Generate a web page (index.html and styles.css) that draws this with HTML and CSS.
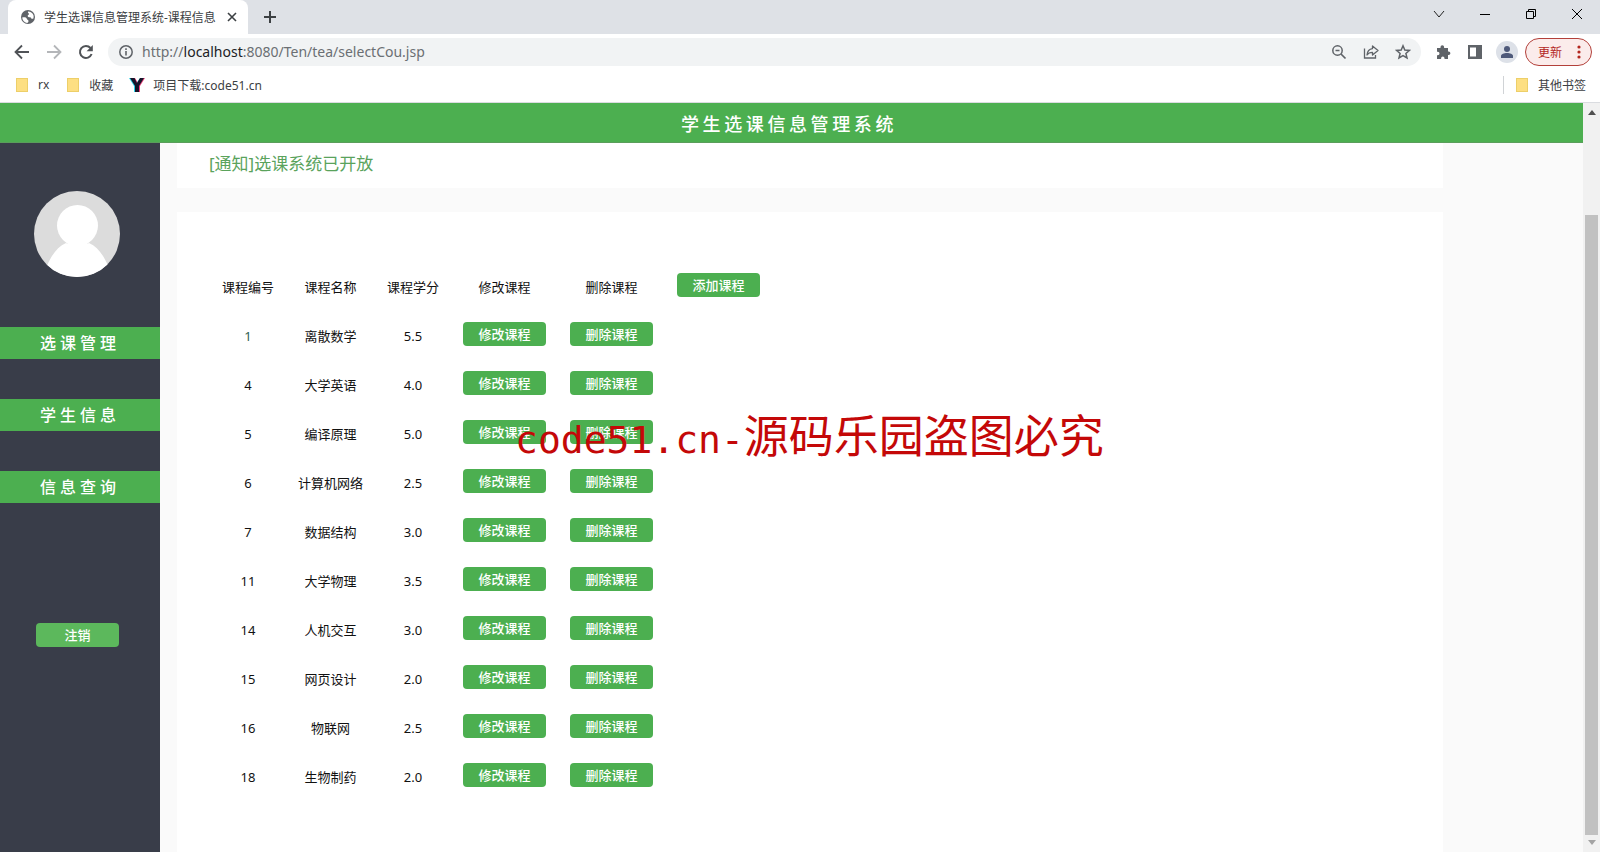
FILE: index.html
```
<!DOCTYPE html>
<html lang="zh-CN">
<head>
<meta charset="utf-8">
<title>学生选课信息管理系统-课程信息</title>
<link rel="stylesheet" href="styles.css">
</head>
<body>
<div class="browser">
  <div class="tabstrip">
    <div class="tab">
      <svg class="globe" width="16" height="16" viewBox="0 0 16 16"><circle cx="8" cy="8" r="7" fill="#5f6368"/><path d="M2.200 8.500C4 8 6.500 8.300 6.800 9.800c.2 1.200 1.700.8 1.700 2.200 0 1-.8 2-1.500 2C4 13.500 2.300 11 2.200 8.500zM8 2.400c2.500 0 4.500 1.300 5.400 3.600.4 1.400.3 2.600-.2 3.800-1.200.2-2.400-.3-2.600-1.500-1.400.2-2.900-.1-2.900-1.300C7.700 5.800 9 6 9 5c0-.8-1.500-1-1-2.600z" fill="#fff"/></svg>
      <span class="tab-title">学生选课信息管理系统-课程信息</span>
      <button class="icon-btn" aria-label="关闭标签页"><svg width="10" height="10" viewBox="0 0 10 10"><path d="M1 1l8 8M9 1L1 9" stroke="#3c4043" stroke-width="1.600"/></svg></button>
    </div>
    <button class="icon-btn new-tab" aria-label="新标签页"><svg width="14" height="14" viewBox="0 0 14 14"><path d="M7 1v12M1 7h12" stroke="#3c4043" stroke-width="2"/></svg></button>
    <div class="window-controls">
      <button class="icon-btn" aria-label="搜索标签页"><svg width="12" height="12" viewBox="0 0 12 12"><path d="M1 3l5 6 5-6" fill="none" stroke="#222"/></svg></button>
      <button class="icon-btn" aria-label="最小化"><svg width="12" height="12" viewBox="0 0 12 12"><path d="M1 6.500h10" stroke="#000"/></svg></button>
      <button class="icon-btn" aria-label="还原"><svg width="12" height="12" viewBox="0 0 12 12"><path d="M1.500 3.500h7v7h-7zM3.500 3.500v-2h7v7h-2" fill="none" stroke="#000"/></svg></button>
      <button class="icon-btn" aria-label="关闭"><svg width="12" height="12" viewBox="0 0 12 12"><path d="M1 1l10 10M11 1L1 11" stroke="#000"/></svg></button>
    </div>
  </div>

  <div class="toolbar">
    <button class="icon-btn" aria-label="后退"><svg width="16" height="16" viewBox="0 0 16 16"><path d="M15 8H2M8 1.500L1.500 8 8 14.500" fill="none" stroke="#505357" stroke-width="1.800"/></svg></button>
    <button class="icon-btn" aria-label="前进"><svg width="16" height="16" viewBox="0 0 16 16"><path d="M1 8h13M8 1.500L14.500 8 8 14.500" fill="none" stroke="#b4b6b9" stroke-width="1.800"/></svg></button>
    <button class="icon-btn" aria-label="重新加载"><svg width="16" height="16" viewBox="0 0 16 16"><path d="M13.600 10A6 6 0 1 1 12.500 4" fill="none" stroke="#505357" stroke-width="2"/><path d="M14.800 1v6.200H8.600z" fill="#505357"/></svg></button>
    <div class="omnibox">
      <svg width="16" height="16" viewBox="0 0 16 16"><circle cx="8" cy="8" r="6.200" fill="none" stroke="#5f6368" stroke-width="1.500"/><path d="M8 7v4.500M8 4.300v1.600" stroke="#5f6368" stroke-width="1.600"/></svg>
      <a class="url" href="#">http://<span class="host">localhost</span>:8080/Ten/tea/selectCou.jsp</a>
      <button class="icon-btn" aria-label="缩放"><svg width="16" height="16" viewBox="0 0 16 16"><circle cx="6.500" cy="6.500" r="4.700" fill="none" stroke="#5f6368" stroke-width="1.500"/><path d="M4.500 6.500h4M10 10l4.500 4.500" stroke="#5f6368" stroke-width="1.700"/></svg></button>
      <button class="icon-btn" aria-label="分享"><svg width="16" height="16" viewBox="0 0 16 16"><path d="M1.500 4.500v9.500h11v-3" fill="none" stroke="#5f6368" stroke-width="1.300"/><path d="M9.500 2l5.500 4.500L9.500 11V8.300C7 8.300 5.200 9 4 11c.3-3.500 2.200-6 5.500-6.400z" fill="none" stroke="#5f6368" stroke-width="1.300" stroke-linejoin="round"/></svg></button>
      <button class="icon-btn" aria-label="收藏此页"><svg width="16" height="16" viewBox="0 0 16 16"><path d="M8 1.800l1.800 4.200 4.600.4-3.500 3 1.100 4.500L8 11.500l-4 2.400 1.100-4.500-3.500-3L6.200 6z" fill="none" stroke="#5f6368" stroke-width="1.500"/></svg></button>
    </div>
    <div class="actions">
      <button class="icon-btn" aria-label="扩展程序"><svg width="16" height="16" viewBox="0 0 16 16"><path d="M2 4h3.500V3a1.800 1.800 0 0 1 3.600 0v1H13v3.500h.6a1.800 1.800 0 0 1 0 3.600H13V15H9.500v-.8a1.700 1.700 0 0 0-3.400 0v.8H2v-3.800h.8a1.700 1.700 0 0 0 0-3.400H2z" fill="#5f6368"/></svg></button>
      <button class="icon-btn" aria-label="侧边栏"><svg width="16" height="16" viewBox="0 0 16 16"><path d="M1 1h14v14H1z" fill="#5f6368"/><path d="M3 3.500h6v9H3z" fill="#fff"/></svg></button>
      <button class="icon-btn profile" aria-label="个人资料"><svg width="14" height="14" viewBox="0 0 14 14"><circle cx="7" cy="4" r="3" fill="#4f5a7a"/><path d="M1 13v-2c0-2 3-3 6-3s6 1 6 3v2z" fill="#4f5a7a"/></svg></button>
    </div>
    <button class="update">更新<svg width="4" height="16" viewBox="0 0 4 16"><circle cx="2" cy="3" r="1.600" fill="#b3261e"/><circle cx="2" cy="8" r="1.600" fill="#b3261e"/><circle cx="2" cy="13" r="1.600" fill="#b3261e"/></svg></button>
  </div>

  <div class="bookmarks">
    <a href="#"><span class="folder"></span>rx</a>
    <a href="#"><span class="folder"></span>收藏</a>
    <a href="#" class="site"><svg width="16" height="16" viewBox="0 0 16 16"><path d="M0 1h4l3.500 5L11 1h3.500L9 9v6H5V9z" fill="#2ad4e8"/><path d="M2 1h4l3 5 3-5h4l-5 8v6H8V9z" fill="#f0407c"/><path d="M1 1h4.500L8 6l3-5h4l-5 8v6H6V9z" fill="#15152a"/></svg>项目下载:code51.cn</a>
    <a href="#" class="other"><span class="folder"></span>其他书签</a>
  </div>

  <div class="viewport">
    <div class="page">
      <header class="banner">学生选课信息管理系统</header>
      <div class="layout">
        <aside class="sidebar">
          <svg class="avatar" width="86" height="86" viewBox="0 0 86 86"><clipPath id="disc"><circle cx="43" cy="43" r="43"/></clipPath><g clip-path="url(#disc)"><path d="M0 0h86v86H0z" fill="#dcdcdc"/><circle cx="43.500" cy="34.500" r="20.500" fill="#fff"/><path d="M32 48Q36 54 32 52C23 56 17 65 13 75V90H74V75C70 65 64 56 55 52Q51 54 55 48z" fill="#fff"/></g></svg>
          <nav class="menu">
            <a href="#">选课管理</a>
            <a href="#">学生信息</a>
            <a href="#">信息查询</a>
          </nav>
          <button class="btn logout">注销</button>
        </aside>
        <main class="content">
          <section class="notice"><a href="#">[通知]选课系统已开放</a></section>
          <section class="panel">
            <table class="courses">
              <thead>
                <tr><th>课程编号</th><th>课程名称</th><th>课程学分</th><th>修改课程</th><th>删除课程</th><th class="action"><button class="btn">添加课程</button></th></tr>
              </thead>
              <tbody>
                <tr><td class="visited">1</td><td>离散数学</td><td>5.5</td><td class="action"><button class="btn">修改课程</button></td><td class="action"><button class="btn">删除课程</button></td></tr>
                <tr><td>4</td><td>大学英语</td><td>4.0</td><td class="action"><button class="btn">修改课程</button></td><td class="action"><button class="btn">删除课程</button></td></tr>
                <tr><td>5</td><td>编译原理</td><td>5.0</td><td class="action"><button class="btn">修改课程</button></td><td class="action"><button class="btn">删除课程</button></td></tr>
                <tr><td>6</td><td>计算机网络</td><td>2.5</td><td class="action"><button class="btn">修改课程</button></td><td class="action"><button class="btn">删除课程</button></td></tr>
                <tr><td>7</td><td>数据结构</td><td>3.0</td><td class="action"><button class="btn">修改课程</button></td><td class="action"><button class="btn">删除课程</button></td></tr>
                <tr><td>11</td><td>大学物理</td><td>3.5</td><td class="action"><button class="btn">修改课程</button></td><td class="action"><button class="btn">删除课程</button></td></tr>
                <tr><td>14</td><td>人机交互</td><td>3.0</td><td class="action"><button class="btn">修改课程</button></td><td class="action"><button class="btn">删除课程</button></td></tr>
                <tr><td>15</td><td>网页设计</td><td>2.0</td><td class="action"><button class="btn">修改课程</button></td><td class="action"><button class="btn">删除课程</button></td></tr>
                <tr><td>16</td><td>物联网</td><td>2.5</td><td class="action"><button class="btn">修改课程</button></td><td class="action"><button class="btn">删除课程</button></td></tr>
                <tr><td>18</td><td>生物制药</td><td>2.0</td><td class="action"><button class="btn">修改课程</button></td><td class="action"><button class="btn">删除课程</button></td></tr>
              </tbody>
            </table>
          </section>
        </main>
      </div>
    </div>
    <div class="scrollbar">
      <svg width="8" height="5" viewBox="0 0 8 5"><path d="M0 5l4-5 4 5z" fill="#505050"/></svg>
      <div class="thumb"></div>
      <svg width="8" height="5" viewBox="0 0 8 5"><path d="M0 0l4 5 4-5z" fill="#a3a3a3"/></svg>
    </div>
  </div>
  <div class="watermark"><span class="latin">code51.cn-</span>源码乐园盗图必究</div>
</div>
</body>
</html>
```

FILE: styles.css
```
* { box-sizing: border-box; }

body {
  margin: 0;
  font-family: "Noto Sans", "Noto Sans CJK SC", sans-serif;
  font-size: 13px;
  color: #111;
}

a { color: inherit; text-decoration: none; }

button {
  font: inherit;
  border: 0;
  padding: 0;
  background: none;
  color: inherit;
}

svg { display: block; flex: none; }

.browser {
  position: relative;
  display: flex;
  flex-direction: column;
  height: 100vh;
  overflow: hidden;
  background: #fff;
}

.icon-btn { display: flex; flex: none; }

/* Tab strip */
.tabstrip {
  display: flex;
  align-items: center;
  height: 34px;
  flex: none;
  padding-left: 8px;
  background: #dee1e6;
}

.tab {
  display: flex;
  align-items: center;
  gap: 8px;
  align-self: stretch;
  width: 240px;
  padding: 0 11px 0 12px;
  border-radius: 8px 8px 0 0;
  background: #fff;
  font-size: 12px;
  color: #3c4043;
}

.tab-title { flex: 1; white-space: nowrap; }

.new-tab { margin-left: 15px; }

.window-controls {
  display: flex;
  gap: 34px;
  margin: 0 17px 6px auto;
}

/* Toolbar */
.toolbar {
  display: flex;
  align-items: center;
  gap: 16px;
  height: 36px;
  flex: none;
  padding: 0 8px 0 14px;
}

.omnibox {
  display: flex;
  flex: 1;
  align-items: center;
  gap: 16px;
  height: 28px;
  margin-left: -2px;
  padding: 0 10px;
  border-radius: 14px;
  background: #f1f3f4;
}

.url {
  flex: 1;
  margin-left: -8px;
  font-size: 14px;
  line-height: 26px;
  color: #6b6f73;
}

.host { color: #202124; }

.actions {
  display: flex;
  align-items: center;
  gap: 16px;
  margin: 0 -9px 0 -2px;
}

.profile {
  align-items: center;
  justify-content: center;
  width: 22px;
  height: 22px;
  margin-left: -3px;
  border-radius: 50%;
  background: #dde1e8;
}

.update {
  display: flex;
  align-items: center;
  justify-content: space-between;
  width: 67px;
  height: 28px;
  padding: 0 10px 0 12px;
  border: 1px solid #b3403a;
  border-radius: 14px;
  background: #fbeceb;
  color: #b3261e;
  font-size: 12px;
}

/* Bookmarks */
.bookmarks {
  display: flex;
  align-items: center;
  gap: 18px;
  height: 33px;
  flex: none;
  padding: 0 14px 3px 16px;
  border-bottom: 1px solid #dadce0;
  font-size: 12px;
  color: #3c4043;
}

.bookmarks a {
  display: flex;
  align-items: center;
  gap: 10px;
}

.bookmarks .site { gap: 8px; margin-left: -2px; }

.bookmarks .other {
  margin-left: auto;
  padding-left: 12px;
  border-left: 1px solid #d0d3d6;
}

.folder {
  width: 12px;
  height: 14px;
  border: 1px solid #edcf69;
  background: #fddf82;
}

/* Page */
.viewport {
  display: flex;
  flex: 1;
  min-height: 0;
}

.page {
  display: flex;
  flex: 1;
  flex-direction: column;
  overflow: hidden;
  background: #fafafa;
}

.banner {
  height: 40px;
  flex: none;
  padding-right: 5px;
  border-bottom: 1px solid #5a9e5b;
  background: #4caf50;
  color: #fff;
  font-size: 18px;
  font-weight: 500;
  line-height: 42px;
  letter-spacing: 0.2em;
  text-align: center;
}

.layout { display: flex; flex: 1; min-height: 0; }

.sidebar {
  display: flex;
  flex-direction: column;
  width: 160px;
  flex: none;
  padding-top: 48px;
  background: #393d49;
}

.avatar { margin-left: 34px; }

.menu {
  display: flex;
  flex-direction: column;
  gap: 40px;
  margin-top: 50px;
}

.menu a {
  height: 32px;
  background: #4caf50;
  color: #fff;
  font-size: 16px;
  font-weight: 500;
  line-height: 32px;
  letter-spacing: 4px;
  text-align: center;
}

.btn {
  display: inline-block;
  width: 83px;
  height: 24px;
  border-radius: 4px;
  background: #4caf50;
  color: #fff;
  font-size: 13px;
  font-weight: 500;
  line-height: 24px;
  text-align: center;
  white-space: nowrap;
  vertical-align: middle;
}

.logout {
  margin: 120px 0 0 36px;
  background: #5cb85c;
}

.content {
  display: flex;
  flex: 1;
  flex-direction: column;
  gap: 24px;
  padding: 0 140px 0 17px;
}

.notice {
  height: 45px;
  flex: none;
  padding-left: 32px;
  background: #fff;
  color: #5aa35c;
  font-size: 17px;
  line-height: 42px;
}

.panel {
  flex: 1;
  padding: 50px 33px 0;
  background: #fff;
}

.courses { border-collapse: collapse; }

.courses th,
.courses td {
  height: 49px;
  padding: 0 12px;
  font-weight: 400;
  text-align: center;
  white-space: nowrap;
}

.courses .action { padding-bottom: 3px; }

.courses .visited { color: #2f6152; }

/* Scrollbar */
.scrollbar {
  display: flex;
  flex-direction: column;
  align-items: center;
  width: 17px;
  flex: none;
  padding: 7px 0;
  background: #f1f1f1;
}

.thumb {
  flex: 1;
  width: 13px;
  margin: 100px 0 5px;
  background: #c1c1c1;
}

.watermark {
  position: absolute;
  top: 403px;
  left: 515px;
  color: #c40808;
  font-size: 45px;
  line-height: 66px;
  white-space: nowrap;
  pointer-events: none;
}

.latin {
  font-family: "DejaVu Sans Mono", monospace;
  font-size: 38px;
}
```
